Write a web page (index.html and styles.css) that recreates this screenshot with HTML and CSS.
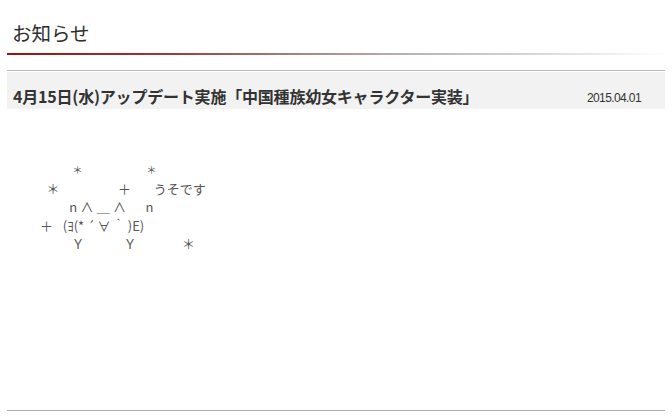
FILE: index.html
```html
<!DOCTYPE html>
<html lang="ja">
<head>
<meta charset="utf-8">
<title>お知らせ</title>
<link rel="stylesheet" href="styles.css">
</head>
<body>
<div class="page">
  <h2 class="page-title">お知らせ</h2>
  <div class="title-rule"></div>
  <article class="news">
    <header class="news-head">
      <h3 class="news-title">4月15日(水)アップデート実施「中国種族幼女キャラクター実装」</h3>
      <span class="news-date">2015.04.01</span>
    </header>
    <div class="news-body">
<pre class="aa">&#x3000;&#x3000;&#x2002;<span class="sstar">＊</span>&#x3000;&#x3000;&#x3000;&#x3000;&#x3000;<span class="sstar">＊</span>
&#x2002;＊&#x3000;&#x3000;&#x3000;&#x3000;&#x2002;＋&#x3000;&#x2002;&#x2005;うそです
&#x3000;&#x3000;&#x2005;n&#x2005;∧&#x2005;＿&#x2005;∧&#x3000;&#x2002;n
＋&#x2002;&#x2005;(ﾖ(*&#x2005;´&#x2006;∀&#x2006;｀&#x2006;)E)
&#x3000;&#x3000;&#x2005;&#x2006;Ｙ&#x3000;&#x3000;&#x3000;Ｙ&#x3000;&#x3000;&#x3000;&#x2002;＊</pre>
    </div>
    <div class="news-foot"></div>
  </article>
</div>
</body>
</html>
```
FILE: styles.css
```css
html, body {
  margin: 0;
  padding: 0;
  background: #fff;
}
body {
  font-family: "Noto Sans CJK JP", "Noto Sans", sans-serif;
  color: #333;
}
.page {
  padding: 0 7px;
}
.page-title {
  margin: 0;
  padding: 20px 0 0 5px;
  height: 53px;
  box-sizing: border-box;
  font-size: 19.5px;
  line-height: 26px;
  font-weight: normal;
  color: #2e2e2e;
}
.title-rule {
  height: 2px;
  background: linear-gradient(to right, #a00f0f 0%, #9c3a3a 25%, #a78686 45%, #b8b0b0 60%, #d6d6d6 80%, #ffffff 100%);
}
.news {
  margin-top: 15px;
}
.news-head {
  border-top: 1px solid #b9b9b9;
  display: flex;
  align-items: flex-end;
  justify-content: space-between;
  height: 39px;
  box-sizing: border-box;
  padding: 0 24px 3px 6px;
  background: linear-gradient(#fff 0 1px, #f2f2f2 1px);
}
.news-title {
  margin: 0;
  font-size: 16px;
  line-height: 20px;
  font-weight: bold;
  color: #333;
  letter-spacing: -0.2px;
}
.news-date {
  font-family: "Liberation Sans", sans-serif;
  font-size: 12px;
  line-height: 14px;
  letter-spacing: -0.6px;
  color: #333;
  padding-bottom: 1px;
}
.news-body {
  height: 301px;
  padding: 51px 0 0 33px;
  box-sizing: border-box;
}
.aa {
  margin: 0;
  font-family: "Noto Sans CJK JP", sans-serif;
  font-size: 13px;
  line-height: 18.5px;
  color: #555;
}
.sstar {
  font-size: 10px;
  letter-spacing: -1px;
}
.news-foot {
  border-top: 1px solid #acacac;
}
```
